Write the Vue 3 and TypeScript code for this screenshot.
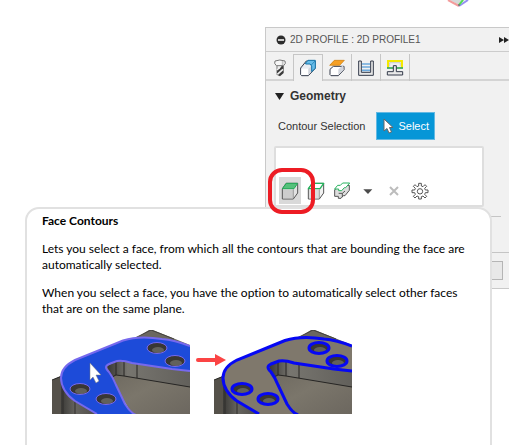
<script setup lang="ts">
import { ref } from 'vue'

const tabs = [
  { id: 'tool', label: 'Tool' },
  { id: 'geometry', label: 'Geometry' },
  { id: 'heights', label: 'Heights' },
  { id: 'passes', label: 'Passes' },
  { id: 'linking', label: 'Linking' },
]
const activeTab = ref('geometry')

const modes = [
  { id: 'face', label: 'Face Contours' },
  { id: 'pocket', label: 'Pocket Contours' },
  { id: 'silhouette', label: 'Silhouette' },
  { id: 'more', label: 'More selection types' },
  { id: 'clear', label: 'Clear selection' },
  { id: 'settings', label: 'Selection settings' },
]
const activeMode = ref('face')

const holes = [
  { cx: 105, cy: 18 },
  { cx: 123, cy: 31 },
  { cx: 28, cy: 59 },
  { cx: 54, cy: 69 },
]
const scenes = [
  { id: 'before', title: 'Selected face', picked: true },
  { id: 'after', title: 'Resulting contours', picked: false },
]
const outer = 'M45 84 L23 71 C14 65 9 56 9 48 C9 40 15 34 23 30 L60 15 L71 10.500 C82 7 98 7 110 9 C121 10 130 13 138 16'
const inner = 'M138 41 L120 39 L80 33 C74 31 70 30 65 31 L57 34 C53 36 53 38 57 42 C60 46 62 50 64 55 L73 74 C76 79 79 83 84 85'
const plate = outer + ' V41 L120 39 L80 33 C74 31 70 30 65 31 L57 34 C53 36 53 38 57 42 C60 46 62 50 64 55 L73 74 C76 79 79 83 84 85 H45 Z'
</script>

<template>
  <main class="page">
    <div class="canvas">
      <svg class="viewcube" width="24" height="8" viewBox="0 0 24 8" aria-hidden="true">
        <path d="M3 0 L12 5 L18 0Z" fill="#d5d8d8" />
        <path d="M1 0 L12 6" stroke="#f39c9c" stroke-width="2" />
        <path d="M12 6 L21 0" stroke="#9490f2" stroke-width="2" />
        <path d="M12 5 L16 0" stroke="#50e050" stroke-width="2" />
        <circle cx="12" cy="5" r="1" fill="#777" />
      </svg>
    </div>

    <section class="panel">
      <header class="title-bar">
        <svg width="10" height="10" viewBox="0 0 10 10" aria-hidden="true">
          <circle cx="5" cy="5" r="4.500" fill="#2c2c2c" />
          <path d="M2 5h6" stroke="#fff" stroke-width="1.500" />
        </svg>
        <h1>2D PROFILE : 2D PROFILE1</h1>
        <svg class="forward" width="10" height="6" viewBox="0 0 10 6" aria-hidden="true">
          <path d="M0 0 L5 3 L0 6Z M5 0 L10 3 L5 6Z" fill="#222" />
        </svg>
      </header>

      <nav class="tabs">
        <button
          v-for="tab in tabs"
          :key="tab.id"
          type="button"
          :class="['tab', { active: tab.id === activeTab }]"
          :aria-label="tab.label"
          @click="activeTab = tab.id"
        >
          <svg width="18" height="18" viewBox="0 0 54 54" aria-hidden="true">
            <g v-if="tab.id === 'tool'">
              <path d="M17 19 H38 V42 L27 52 L17 47Z" fill="#3c3c3c" />
              <path d="M18 33 L30 21 M19 46 L36 31" stroke="#eee" stroke-width="5" />
              <path d="M23 18 V29" stroke="#eee" stroke-width="8" />
              <path d="M12 6 Q26 0 42 6 Q46 13 38 20 H16 Q8 13 12 6Z" fill="#f6f6f6" stroke="#777" stroke-width="3" />
              <path d="M35 6 V18" stroke="#c4c4c4" stroke-width="5" />
            </g>
            <g v-else-if="tab.id === 'geometry'" stroke-linejoin="round">
              <path d="M5 27 L22 6 H48 V29 L28 50 H8 L5 47Z" fill="#e9ecf2" stroke="#343b4b" stroke-width="3" />
              <path d="M7 29 H28 V48 H7Z" fill="#fff" />
              <path d="M28 30 L37 21 V38 L28 48Z" fill="#d2d5dd" />
              <path d="M20 12 L27 4 H49 V28 L38 38 V21 L33 15 H20Z" fill="#67bce9" stroke="#1674a8" stroke-width="3" />
              <path d="M37 18 L48 6" stroke="#1674a8" stroke-width="2" />
            </g>
            <g v-else-if="tab.id === 'heights'" stroke-linejoin="round">
              <path d="M6 31 L16 22 H48 V32 L31 50 H9 L6 47Z" fill="#fff" stroke="#343b4b" stroke-width="3" />
              <path d="M31 31 L46 18 V32 L31 48Z" fill="#d2d5dd" />
              <path d="M5 19 L19 4 H49 L35 19Z" fill="#f6a024" stroke="#c87700" stroke-width="2" />
            </g>
            <g v-else-if="tab.id === 'passes'">
              <path d="M14 15 H40 M14 24 H40 M14 34 H40" stroke="#6ca9dc" stroke-width="5" />
              <path d="M5 6 H13 V40 H41 V6 H49 V49 H5Z" fill="#e8e8e8" stroke="#343b4b" stroke-width="3" />
            </g>
            <g v-else>
              <path d="M6 26 V6 H48 V26" fill="none" stroke="#f5e900" stroke-width="6" />
              <path d="M11 22 V11 H43 V22" fill="none" stroke="#bbb" stroke-width="2" />
              <path d="M3 27 H51" stroke="#36a852" stroke-width="5" />
              <path d="M4 38 H22 V20 H31 V38 H50 V48 H4Z" fill="#e8e8e8" stroke="#343b4b" stroke-width="3" />
            </g>
          </svg>
        </button>
      </nav>

      <div class="body">
        <h2>
          <svg width="9" height="7" viewBox="0 0 9 7" aria-hidden="true"><path d="M0 0h9L4.500 7Z" fill="#222" /></svg>
          Geometry
        </h2>
        <div class="field">
          <label for="contour-select">Contour Selection</label>
          <button id="contour-select" class="select" type="button">
            <svg width="11" height="16" viewBox="0 0 11 16" aria-hidden="true">
              <path d="M1 1 V13 L4 10.500 L6 15 L8.500 14 L6.500 9.500 H10Z" fill="#fff" stroke="#666" stroke-width="1" />
            </svg>
            Select
          </button>
        </div>
        <div class="selection-box">
          <div class="toolbar">
            <button
              v-for="mode in modes"
              :key="mode.id"
              type="button"
              :class="['mode', { pressed: mode.id === activeMode }]"
              :aria-label="mode.label"
              @click="activeMode = mode.id"
            >
              <svg width="18" height="18" viewBox="0 0 54 54" aria-hidden="true">
                <g v-if="mode.id === 'face'" stroke-linejoin="round">
                  <path d="M4 21 L15 4 H50 V33 L37 51 H4Z" fill="#e2e2e2" stroke="#555" stroke-width="3" />
                  <path d="M6 23 H36 V49 H6Z" fill="#cdcdcd" />
                  <path d="M37 22 V50" stroke="#777" stroke-width="2" />
                  <path d="M4 20 L16 4 H50 L39 20Z" fill="#55c17b" stroke="#23a857" stroke-width="3" />
                </g>
                <g v-else-if="mode.id === 'pocket'" stroke-linejoin="round">
                  <path d="M4 21 L15 4 H50 V33 L37 51 H4Z" fill="#f2f2f2" stroke="#555" stroke-width="3" />
                  <path d="M6 23 H36 V49 H6Z" fill="#dcdcdc" />
                  <path d="M37 22 V50" stroke="#777" stroke-width="2" />
                  <path d="M4 20 L16 4 H50 L39 20Z" fill="#fff" stroke="#26b35e" stroke-width="4" />
                </g>
                <g v-else-if="mode.id === 'silhouette'" stroke-linejoin="round">
                  <path d="M5 23 L22 12 L49 10 V25 L36 41 H31 L24 49 H16 V43 H5Z" fill="#ddd" stroke="#555" stroke-width="3" />
                  <path d="M17 34 H28 V45 M28 34 L36 27" fill="none" stroke="#555" stroke-width="3" />
                  <path d="M5 21 L14 10 H22 L29 3 H50 L38 17 H34 L26 26 H17 V21Z" fill="#fff" stroke="#26b35e" stroke-width="3" />
                </g>
                <path v-else-if="mode.id === 'more'" d="M13 22 H40 L27 36Z" fill="#4b4b4b" />
                <path v-else-if="mode.id === 'clear'" d="M15 15 L39 39 M39 15 L15 39" stroke="#bcbcbc" stroke-width="6" />
                <g v-else fill="none" stroke="#555" stroke-width="3">
                  <path d="M23 4h8v8l5 2 6-6 5 5-6 6 2 5h8v8h-8l-2 5 6 6-5 5-6-6-5 2v7h-8v-7l-5-2-6 6-5-5 6-6-2-5H3v-8h8l2-5-6-6 5-5 6 6 5-2Z" />
                  <circle cx="27" cy="28" r="8" />
                </g>
              </svg>
              <span v-if="mode.id === 'face'" class="highlight"></span>
            </button>
          </div>
        </div>
        <hr />
      </div>

      <footer>
        <button class="corner-button" type="button" aria-label="Cancel"></button>
      </footer>
    </section>

    <aside class="tip" role="tooltip">
      <h3>Face Contours</h3>
      <p>Lets you select a face, from which all the contours that are bounding the face are automatically selected.</p>
      <p>When you select a face, you have the option to automatically select other faces that are on the same plane.</p>
      <div class="figures">
        <template v-for="scene in scenes" :key="scene.id">
          <svg v-if="!scene.picked" class="arrow" width="32" height="14" viewBox="0 0 32 14" aria-hidden="true">
            <path d="M3 7H22" stroke="#fb4444" stroke-width="4" stroke-linecap="round" />
            <path d="M20 1 L31 7 L20 13Z" fill="#fb4444" />
          </svg>
          <svg width="138" height="84" viewBox="0 0 138 84" role="img" :aria-label="scene.title">
            <defs>
              <linearGradient :id="'wall-' + scene.id" x1="0" x2="1">
                <stop offset="0" stop-color="#3b3a37" />
                <stop offset="0.400" stop-color="#66645f" />
                <stop offset="1" stop-color="#4e4c48" />
              </linearGradient>
              <linearGradient :id="'pocket-' + scene.id" x1="0" x2="1">
                <stop offset="0" stop-color="#373633" />
                <stop offset="0.250" stop-color="#77756f" />
                <stop offset="1" stop-color="#62605b" />
              </linearGradient>
              <linearGradient :id="'floor-' + scene.id" x1="0" y1="0" x2="1" y2="1">
                <stop offset="0" stop-color="#6a655c" />
                <stop offset="0.500" stop-color="#7b766b" />
                <stop offset="1" stop-color="#6c675f" />
              </linearGradient>
            </defs>
            <path d="M76 13 L97 0 Q99 -1 101 0 L138 15 V84 H76Z" fill="#6b675f" />
            <path d="M83 8 L99 0 L122 9" fill="none" stroke="#44423e" />
            <path d="M0 50 L20 41 V84 H0Z" fill="#55514a" />
            <path d="M0 50 L10 46" stroke="#292825" />
            <path d="M9 48 C9 57 15 66 23 71 L45 84 H9Z" :fill="`url(#wall-${scene.id})`" />
            <path d="M11 58 V84 M23 71 V84" stroke="#302f2c" />
            <path d="M50 35 H138 V84 H80Z" :fill="`url(#floor-${scene.id})`" />
            <path d="M55 36 L66 30 L138 41 V57 L84 48 L72 46 L64 45 L60 48Z" :fill="`url(#pocket-${scene.id})`" />
            <path d="M60 47 L64 45 L72 46 L138 57 M64 32 V45 M72 32 V46 M85 34 V48" fill="none" stroke="#262523" />
            <path :d="plate" :fill="scene.picked ? '#1d4bd9' : '#7f786c'" />
            <path :d="outer" fill="none" :stroke="scene.picked ? '#7669ee' : '#0608f4'" :stroke-width="scene.picked ? 2 : 3" />
            <path :d="inner" fill="none" :stroke="scene.picked ? '#7669ee' : '#0608f4'" :stroke-width="scene.picked ? 2 : 3" />
            <g v-for="hole in holes" :key="hole.cx">
              <ellipse :cx="hole.cx" :cy="hole.cy" rx="10" ry="5.500" fill="#393733" />
              <ellipse :cx="hole.cx + 1" :cy="hole.cy + 2" rx="6" ry="3" fill="#62615b" />
              <ellipse
                :cx="hole.cx"
                :cy="hole.cy"
                rx="10"
                ry="5.500"
                fill="none"
                :stroke="scene.picked ? '#7669ee' : '#0608f4'"
                :stroke-width="scene.picked ? 1 : 3"
              />
            </g>
            <path v-if="scene.picked" d="M38 33 V50 L41 47 L44 53 L47 51 L44 45 H49Z" fill="#fff" stroke="#777" stroke-width="0.500" />
          </svg>
        </template>
      </div>
    </aside>
  </main>
</template>

<style>
body {
  margin: 0;
  background: #fff;
}
</style>

<style scoped>
.page {
  position: relative;
  min-height: 100vh;
  overflow: hidden;
  font-family: "Liberation Sans", Arial, sans-serif;
  font-size: 11px;
  color: #333;
}
* {
  box-sizing: border-box;
}
svg {
  display: block;
  flex: none;
}
h1, h2, h3, p {
  margin: 0;
}
button {
  margin: 0;
  padding: 0;
  border: 0;
  background: none;
  font: inherit;
}
.canvas {
  height: 27px;
  display: flex;
  justify-content: flex-end;
  padding-right: 38px;
}
.panel {
  margin-left: 265px;
  background: #f1f1f1;
  border: 1px solid #c9c9c9;
  border-right: 0;
}
.title-bar {
  display: flex;
  align-items: center;
  gap: 4px;
  height: 24px;
  padding-left: 10px;
  border-bottom: 1px solid #ccc;
}
.title-bar h1 {
  font-size: 10px;
  font-weight: 400;
  color: #555;
}
.forward {
  margin-left: auto;
}
.tabs {
  display: flex;
  height: 29px;
  padding-top: 2px;
  box-shadow: inset 0 -2px #d4d4d4;
}
.tab {
  display: flex;
  align-items: center;
  justify-content: center;
  width: 29px;
  border-right: 1px solid #c6c6c6;
}
.tab:first-child {
  width: 28px;
}
.tab.active {
  background: #f1f1f1;
  border-top: 1px solid #c6c6c6;
}
.body {
  padding: 7px 8px 0;
}
h2 {
  display: flex;
  align-items: center;
  gap: 6px;
  height: 16px;
  padding-left: 1px;
  font-size: 12px;
}
.field {
  display: flex;
  align-items: center;
  gap: 11px;
  margin-top: 8px;
  padding-left: 4px;
}
.select {
  display: flex;
  align-items: center;
  gap: 4px;
  height: 28px;
  padding: 0 5px 0 6px;
  border: 1px solid #63b9e3;
  background: #0696d7;
  color: #fff;
}
.selection-box {
  display: flex;
  align-items: flex-end;
  max-width: 210px;
  height: 61px;
  margin-top: 6px;
  padding: 0 3px 1px;
  border: 2px solid #dedede;
  border-radius: 2px;
  background: #fff;
}
.toolbar {
  display: flex;
  gap: 4px;
}
.mode {
  position: relative;
  display: flex;
  align-items: center;
  justify-content: center;
  width: 22px;
  height: 27px;
}
.mode.pressed {
  background: #d9d9d9;
}
.highlight {
  position: absolute;
  z-index: 3;
  inset: -9px -14px -10px -11px;
  border: 4px solid #ed1c24;
  border-radius: 14px;
}
hr {
  margin: 9px 0 0;
  border: 0;
  border-top: 1px solid #c5c5c5;
}
footer {
  display: flex;
  justify-content: flex-end;
  margin-top: 35px;
  padding: 8px 6px;
  border-top: 1px solid #c5c5c5;
}
.corner-button {
  width: 60px;
  height: 19px;
  border: 1px solid #b5b5b5;
  background: #e8e8e8;
}
.tip {
  position: absolute;
  z-index: 2;
  top: 207px;
  right: 17px;
  bottom: -20px;
  left: 25px;
  padding: 4px 15px;
  border: 2px solid #e1e1e1;
  border-radius: 14px;
  background: #fff;
  color: #000;
  font-family: Lato, "Open Sans", sans-serif;
  font-size: 12px;
  font-variant-ligatures: none;
  line-height: 16px;
}
.tip h3 {
  font-size: 12px;
}
.tip p {
  margin-top: 12px;
}
.figures {
  display: flex;
  margin-top: 13px;
  padding-left: 10px;
}
.arrow {
  margin: 23px -13px 0 5px;
}
</style>
